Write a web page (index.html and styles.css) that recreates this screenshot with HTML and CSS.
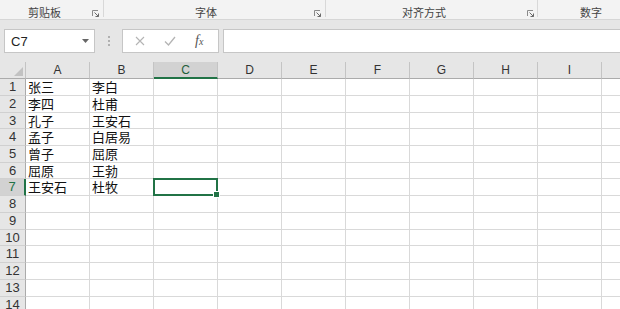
FILE: index.html
```html
<!DOCTYPE html>
<html lang="zh-CN">
<head>
<meta charset="UTF-8">
<meta name="viewport" content="width=device-width, initial-scale=1.0">
<title>工作簿1 - Excel</title>
<link rel="stylesheet" href="styles.css">
</head>
<body>

<div class="ribbon">
    <div class="group g-clip">
        <span class="group-label">剪贴板</span>
        <svg class="launcher" width="7" height="7" viewBox="0 0 7 7"><path d="M0.5 6V0.5H6" fill="none" stroke="#8a8a8a"/><path d="M2.5 2.5L6.5 6.5M6.5 3.5V6.5H3.5" fill="none" stroke="#6a6a6a"/></svg>
    </div>
    <div class="group g-font">
        <span class="group-label">字体</span>
        <svg class="launcher" width="7" height="7" viewBox="0 0 7 7"><path d="M0.5 6V0.5H6" fill="none" stroke="#8a8a8a"/><path d="M2.5 2.5L6.5 6.5M6.5 3.5V6.5H3.5" fill="none" stroke="#6a6a6a"/></svg>
    </div>
    <div class="group g-align">
        <span class="group-label">对齐方式</span>
        <svg class="launcher" width="7" height="7" viewBox="0 0 7 7"><path d="M0.5 6V0.5H6" fill="none" stroke="#8a8a8a"/><path d="M2.5 2.5L6.5 6.5M6.5 3.5V6.5H3.5" fill="none" stroke="#6a6a6a"/></svg>
    </div>
    <div class="group g-num">
        <span class="group-label">数字</span>
    </div>
</div>

<div class="formula-bar">
    <div class="name-box">
        <span>C7</span>
        <svg width="7" height="4" viewBox="0 0 7 4"><path d="M0 0H7L3.5 4Z" fill="#666"/></svg>
    </div>
    <div class="grip"><i></i><i></i><i></i></div>
    <div class="fx-buttons">
        <svg width="10" height="10" viewBox="0 0 10 10"><path d="M1 1L9 9M9 1L1 9" stroke="#b4b4b4" stroke-width="1.1"/></svg>
        <svg width="12" height="10" viewBox="0 0 12 10"><path d="M1 5.5L4.5 9L11 1" fill="none" stroke="#b4b4b4" stroke-width="1.3"/></svg>
        <span class="fx">f<sub>x</sub></span>
    </div>
    <div class="formula-input"></div>
</div>

<div class="sheet" id="sheet"></div>

<script>
var cols = ["A", "B", "C", "D", "E", "F", "G", "H", "I", ""];
var data = [
    ["张三", "李白"],
    ["李四", "杜甫"],
    ["孔子", "王安石"],
    ["孟子", "白居易"],
    ["曾子", "屈原"],
    ["屈原", "王勃"],
    ["王安石", "杜牧"]
];
var sheet = document.getElementById("sheet");

function addCell(cls, text) {
    var d = document.createElement("div");
    d.className = cls;
    d.textContent = text || "";
    sheet.appendChild(d);
    return d;
}

addCell("corner");
for (var c = 0; c < cols.length; c++) {
    addCell(cols[c] == "C" ? "col-head active" : "col-head", cols[c]);
}

for (var r = 1; r <= 14; r++) {
    addCell(r == 7 ? "row-head active" : "row-head", r);
    for (var c = 0; c < cols.length; c++) {
        var txt = (data[r - 1] && data[r - 1][c]) || "";
        var cell = addCell("cell", txt);
        // C7 is the selected cell
        if (r == 7 && c == 2) {
            cell.className = "cell selected";
            var h = document.createElement("span");
            h.className = "fill-handle";
            cell.appendChild(h);
        }
    }
}
</script>
</body>
</html>
```

FILE: styles.css
```css
body {
    margin: 0;
    width: 620px;
    height: 309px;
    overflow: hidden;
    background-color: #e6e6e6;
    font-family: "Liberation Sans", "Noto Sans CJK SC", sans-serif;
}

/* ribbon group labels */
.ribbon {
    display: flex;
    height: 19px;
    background-color: #f3f3f3;
    border-bottom: 1px solid #d6d6d6;
    color: #444;
    font-family: "Noto Sans CJK SC", sans-serif;
    font-size: 11px;
}
.group {
    position: relative;
    height: 17px;
    border-right: 1px solid #d8d8d8;
}
.group-label {
    display: block;
    line-height: 14px;
    padding-top: 5px;
}
.launcher {
    position: absolute;
    top: 10px;
}
.g-clip { width: 103px; }
.g-clip .group-label { margin-left: 28px; }
.g-clip .launcher { left: 92px; }
.g-font { width: 221px; }
.g-font .group-label { margin-left: 91px; }
.g-font .launcher { left: 210px; }
.g-align { width: 211px; }
.g-align .group-label { margin-left: 76px; }
.g-align .launcher { left: 201px; }
.g-num { flex: 1; border-right: none; }
.g-num .group-label { margin-left: 42px; }

/* formula bar */
.formula-bar {
    display: flex;
    align-items: center;
    height: 42px;
    padding-left: 4px;
}
.name-box {
    box-sizing: border-box;
    width: 91px;
    height: 24px;
    background-color: #fff;
    border: 1px solid #c6c6c6;
    display: flex;
    align-items: center;
    justify-content: space-between;
    padding: 0 5px 0 6px;
    font-size: 13px;
    color: #222;
}
.grip {
    width: 27px;
    display: flex;
    flex-direction: column;
    align-items: center;
    gap: 2px;
}
.grip i {
    width: 2px;
    height: 2px;
    background-color: #b0b0b0;
}
.fx-buttons {
    box-sizing: border-box;
    width: 97px;
    height: 24px;
    background-color: #fff;
    border: 1px solid #c6c6c6;
    display: flex;
    align-items: center;
    padding-left: 12px;
    gap: 19px;
}
.fx {
    font-family: "Liberation Serif", serif;
    font-style: italic;
    font-size: 14px;
    color: #555;
    line-height: 14px;
}
.fx sub {
    font-size: 10px;
    vertical-align: 0;
}
.formula-input {
    flex: 1;
    height: 24px;
    box-sizing: border-box;
    margin-left: 4px;
    background-color: #fff;
    border: 1px solid #c6c6c6;
    border-right: none;
}

/* grid */
.sheet {
    display: grid;
    grid-template-columns: 26px repeat(9, 64px) 30px;
    grid-template-rows: 17px 17px 17px 16px 17px 17px 16px 17px 17px 17px 16px 17px 17px 17px 17px;
    background-color: #fff;
    overflow: hidden;
    height: 247px;
}
.sheet > div {
    box-sizing: border-box;
    border-right: 1px solid #d9d9d9;
    border-bottom: 1px solid #d9d9d9;
    white-space: nowrap;
}
.corner {
    background-color: #e6e6e6;
    position: relative;
}
.sheet > .corner {
    border-right: 1px solid #c4c4c4;
    border-bottom: 1px solid #ababab;
}
.corner::after {
    content: "";
    position: absolute;
    right: 2px;
    bottom: 2px;
    border-left: 9px solid transparent;
    border-bottom: 9px solid #c2c2c2;
}
.sheet > .col-head {
    background-color: #e6e6e6;
    border-right: 1px solid #c4c4c4;
    border-bottom: 1px solid #ababab;
    text-align: center;
    font-size: 12px;
    line-height: 16px;
    color: #333;
}
.sheet > .col-head.active {
    background-color: #d2d2d2;
    border-bottom: 2px solid #217346;
    color: #1e5e3b;
}
.sheet > .row-head {
    background-color: #e6e6e6;
    border-right: 1px solid #ababab;
    border-bottom: 1px solid #d0d0d0;
    text-align: center;
    font-size: 13px;
    line-height: 16px;
    color: #333;
}
.sheet > .row-head.active {
    background-color: #d2d2d2;
    border-right: 2px solid #217346;
    color: #217346;
}
.cell {
    font-family: "Noto Sans CJK SC", sans-serif;
    font-size: 13px;
    line-height: 16px;
    padding-left: 2px;
    color: #111;
}
.sheet > .cell.selected {
    position: relative;
    border: 2px solid #217346;
    margin: -1px 0 0 -1px;
}
.fill-handle {
    position: absolute;
    right: -4px;
    bottom: -4px;
    width: 5px;
    height: 5px;
    background-color: #217346;
    border: 1px solid #fff;
}
```
